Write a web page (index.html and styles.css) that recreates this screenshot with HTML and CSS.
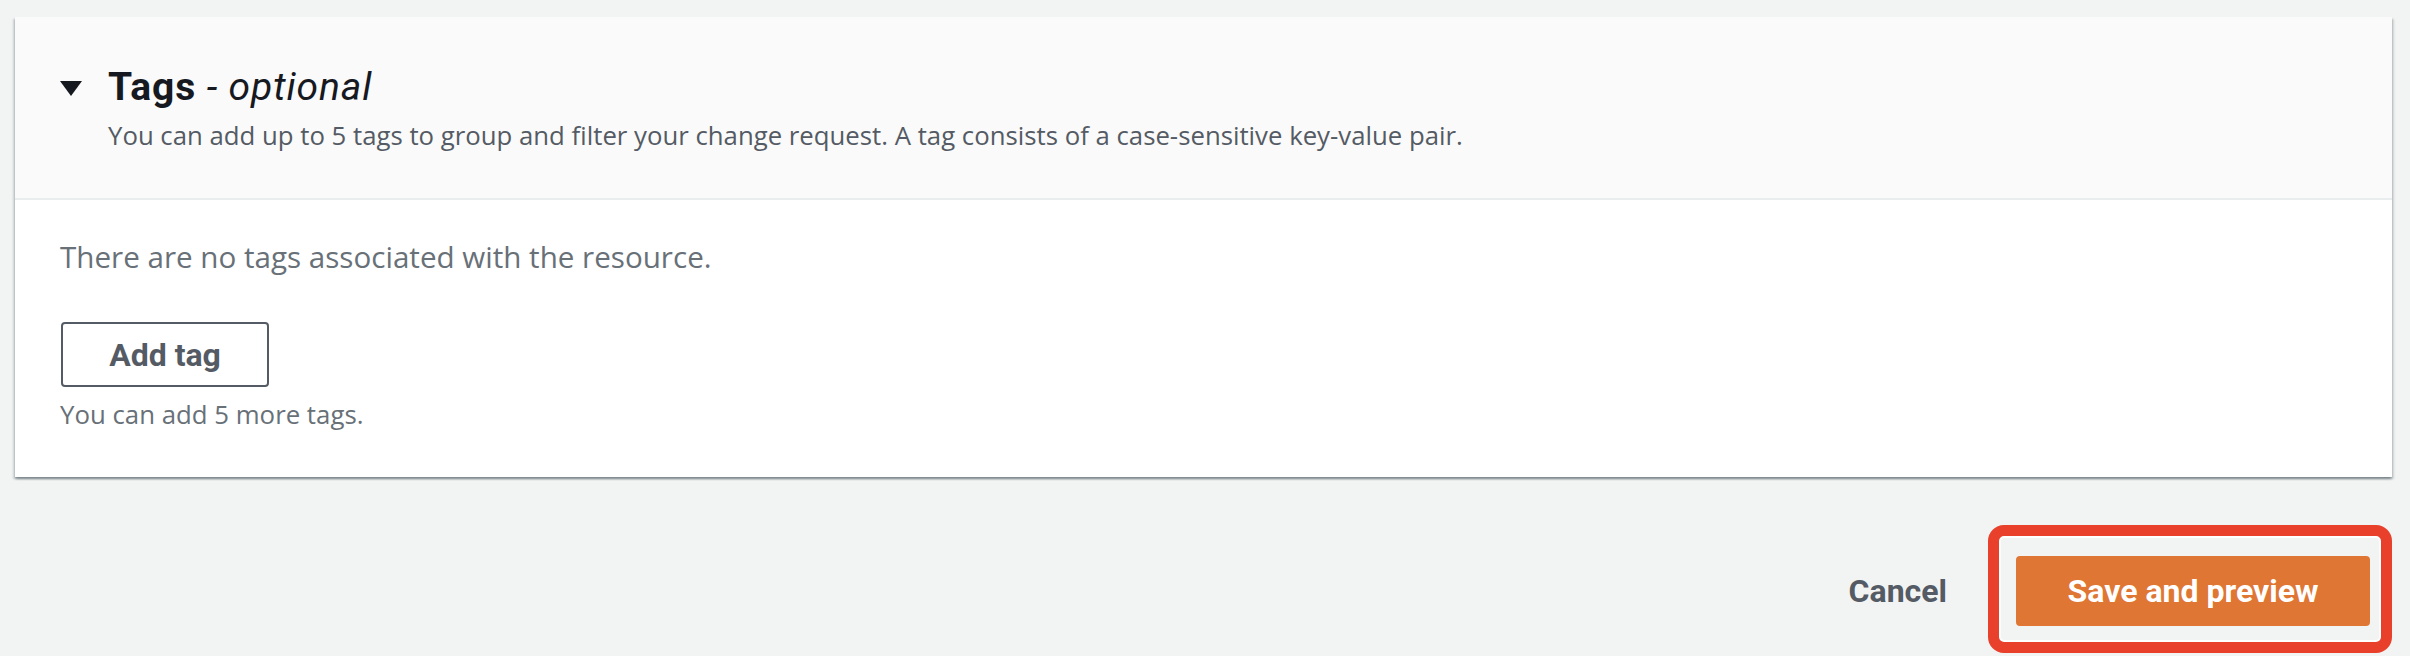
FILE: index.html
```html
<!DOCTYPE html>
<html lang="en">
<head>
<meta charset="utf-8">
<title>Tags - optional</title>
<link rel="stylesheet" href="styles.css">
</head>
<body>
<main class="page">
  <section class="card">
    <header class="card-header">
      <div class="title-row">
        <svg class="caret" width="22" height="15" viewBox="0 0 22 15" aria-hidden="true"><polygon points="0,0 22,0 11,15" fill="#16191f"/></svg>
        <h2 class="title">Tags <i class="optional">- optional</i></h2>
      </div>
      <p class="desc">You can add up to 5 tags to group and filter your change request. A tag consists of a case-sensitive key-value pair.</p>
    </header>
    <div class="card-body">
      <p class="empty">There are no tags associated with the resource.</p>
      <button class="btn-normal" type="button">Add tag</button>
      <p class="hint">You can add 5 more tags.</p>
    </div>
  </section>
  <div class="actions">
    <button class="btn-link" type="button">Cancel</button>
    <div class="highlight">
      <button class="btn-primary" type="button">Save and preview</button>
    </div>
  </div>
</main>
</body>
</html>
```

FILE: styles.css
```css
* { box-sizing: border-box; }
html, body { margin: 0; padding: 0; }
body {
  background: #f2f3f3;
  font-family: "Open Sans", "Noto Sans", "Liberation Sans", Arial, sans-serif;
  color: #16191f;
}
.page {
  padding: 17px 18px 0 15px;
  height: 656px;
  overflow: hidden;
}
.card {
  background: #ffffff;
  box-shadow: 0 2px 2px 0 rgba(0, 28, 36, 0.35), 2px 2px 2px 0 rgba(0, 28, 36, 0.12), -2px 2px 2px 0 rgba(0, 28, 36, 0.12);
}
.card-header {
  background: #fafafa;
  border-bottom: 2px solid #eaeded;
  padding: 46px 45px 44px 45px;
  height: 183px;
}
.title-row {
  display: flex;
  align-items: center;
  gap: 26px;
}
.caret { flex: none; display: block; margin-top: 2px; }
.title {
  margin: 0;
  font-family: Roboto, "Liberation Sans", Arial, sans-serif;
  font-size: 39px;
  line-height: 48px;
  font-weight: 700;
  color: #16191f;
  letter-spacing: 0.9px;
}
.optional {
  font-weight: 400;
  font-style: italic;
}
.desc {
  margin: 6px 0 0 48px;
  font-size: 25.75px;
  line-height: 36px;
  color: #545b64;
}
.card-body {
  padding: 37px 45px 45px 45px;
}
.empty {
  margin: 0;
  font-size: 29.6px;
  line-height: 40px;
  color: #687078;
}
.btn-normal {
  display: block;
  margin: 45px 0 0 1px;
  width: 208px;
  height: 65px;
  border: 2px solid #545b64;
  border-radius: 4px;
  background: #ffffff;
  color: #545b64;
  font-family: Roboto, "Liberation Sans", Arial, sans-serif;
  font-size: 32px;
  font-weight: 700;
  padding: 0;
}
.hint {
  margin: 9px 0 0 0;
  font-size: 25.8px;
  line-height: 36px;
  color: #687078;
}
.actions {
  display: flex;
  justify-content: flex-end;
  align-items: center;
  gap: 41px;
  margin-top: 48px;
}
.btn-link {
  background: none;
  border: 0;
  padding: 4px 0 0 0;
  font-family: Roboto, "Liberation Sans", Arial, sans-serif;
  font-size: 32px;
  font-weight: 700;
  color: #545b64;
}
.highlight {
  border: 11px solid #e8402a;
  border-radius: 16px;
  box-shadow: inset 0 0 0 2px #ffffff;
  padding: 20px 11px 16px 17px;
}
.btn-primary {
  display: block;
  width: 354px;
  height: 70px;
  border: 0;
  border-radius: 4px;
  background: #df7633;
  color: #ffffff;
  font-family: Roboto, "Liberation Sans", Arial, sans-serif;
  font-size: 32px;
  font-weight: 700;
  padding: 0;
}
```
